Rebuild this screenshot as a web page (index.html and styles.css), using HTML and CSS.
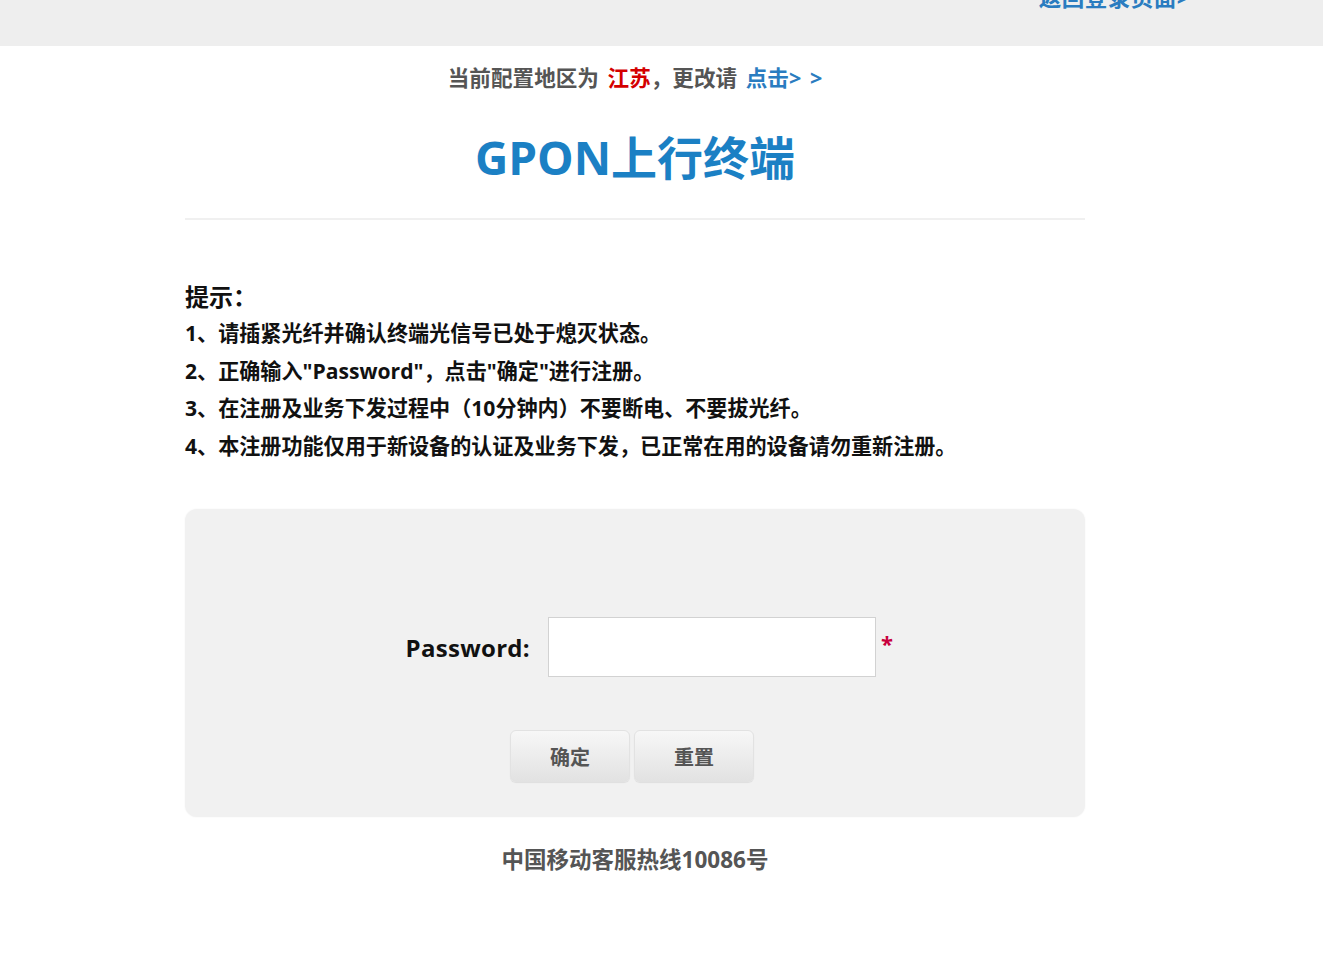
FILE: index.html
```html
<!DOCTYPE html>
<html lang="zh-CN">
<head>
<meta charset="utf-8">
<title>GPON上行终端</title>
<link rel="stylesheet" href="styles.css">
</head>
<body>
<header class="topbar">
  <div class="topbar-inner">
    <a class="back-link" href="#">返回登录页面&gt;</a>
  </div>
</header>
<main class="page">
  <p class="region">当前配置地区为 <span class="region-name">江苏</span>，更改请 <a class="region-link" href="#">点击&gt; &gt;</a></p>
  <h1 class="title">GPON上行终端</h1>
  <hr class="divider">
  <section class="tips">
    <h2 class="tips-title">提示：</h2>
    <ol class="tips-list">
      <li>1、请插紧光纤并确认终端光信号已处于熄灭状态。</li>
      <li>2、正确输入"Password"，点击"确定"进行注册。</li>
      <li>3、在注册及业务下发过程中（10分钟内）不要断电、不要拔光纤。</li>
      <li>4、本注册功能仅用于新设备的认证及业务下发，已正常在用的设备请勿重新注册。</li>
    </ol>
  </section>
  <form class="form-box">
    <div class="field-row">
      <label class="field-label" for="pwd">Password:</label>
      <input class="field-input" id="pwd" type="password">
      <span class="required">*</span>
    </div>
    <div class="btn-row">
      <button type="button" class="btn">确定</button>
      <button type="reset" class="btn">重置</button>
    </div>
  </form>
  <p class="footer">中国移动客服热线10086号</p>
</main>
</body>
</html>
```

FILE: styles.css
```css
* { box-sizing: border-box; }
html, body { margin: 0; padding: 0; background: #fff; }
body {
  font-family: "Open Sans", "Noto Sans CJK SC", sans-serif;
  color: #111;
}
.topbar {
  height: 46px;
  background: #eeeeee;
}
.topbar-inner {
  width: 1270px;
  display: flex;
  justify-content: flex-end;
  padding-right: 80px;
}
.back-link {
  margin-top: -14px;
  font-size: 22.5px;
  line-height: 24px;
  font-weight: 700;
  color: #2a7cc0;
  text-decoration: none;
  letter-spacing: 0.5px;
}
.page {
  width: 900px;
  margin-left: 185px;
  display: flex;
  flex-direction: column;
}
.region {
  margin: 17px 0 0;
  text-align: center;
  font-size: 21.6px;
  line-height: 30px;
  font-weight: 700;
  color: #555;
  word-spacing: 3px;
}
.region-name { color: #d40000; }
.region-link { color: #2a7cc0; text-decoration: none; }
.title {
  margin: 34px 0 0;
  text-align: center;
  font-size: 46px;
  line-height: 60px;
  font-weight: 700;
  color: #1b80c4;
}
.divider {
  margin: 31px 0 0;
  border: 0;
  height: 2px;
  background: #f0f0f0;
}
.tips { margin-top: 59px; }
.tips-title {
  margin: 0;
  font-size: 24px;
  line-height: 35px;
  font-weight: 700;
  color: #111;
}
.tips-list {
  margin: 0;
  padding: 0;
  list-style: none;
}
.tips-list li {
  font-size: 21.1px;
  line-height: 37.5px;
  font-weight: 700;
  color: #111;
}
.form-box {
  margin-top: 45px;
  height: 308px;
  background: #f1f1f1;
  border-radius: 12px;
  box-shadow: 0 0 2px rgba(0,0,0,0.06);
  padding-top: 108px;
}
.field-row {
  display: grid;
  grid-template-columns: 345px 328px auto;
  column-gap: 18px;
  align-items: center;
}
.field-label {
  text-align: right;
  font-size: 24px;
  font-weight: 700;
  color: #111;
  letter-spacing: 0.3px;
}
.field-input {
  width: 328px;
  height: 60px;
  border: 1px solid #d2d2d2;
  background: #fff;
  margin: 0;
  font-size: 20px;
  padding: 0 10px;
}
.required {
  margin-left: -13px;
  margin-top: -8px;
  color: #c8003c;
  font-size: 22px;
  font-weight: 700;
}
.btn-row {
  margin-top: 53px;
  display: flex;
  justify-content: center;
  gap: 4px;
  padding-right: 6px;
}
.btn {
  width: 120px;
  height: 52px;
  border: 1px solid #e2e2e2;
  border-radius: 6px;
  background: linear-gradient(#f7f7f7, #e2e2e2);
  box-shadow: 0 1px 1px rgba(0,0,0,0.08);
  font-family: "Open Sans", "Noto Sans CJK SC", sans-serif;
  font-size: 20px;
  font-weight: 700;
  color: #555;
  padding: 0;
}
.footer {
  margin: 28px 0 0;
  text-align: center;
  font-size: 22.5px;
  line-height: 30px;
  font-weight: 700;
  color: #555;
}
```
